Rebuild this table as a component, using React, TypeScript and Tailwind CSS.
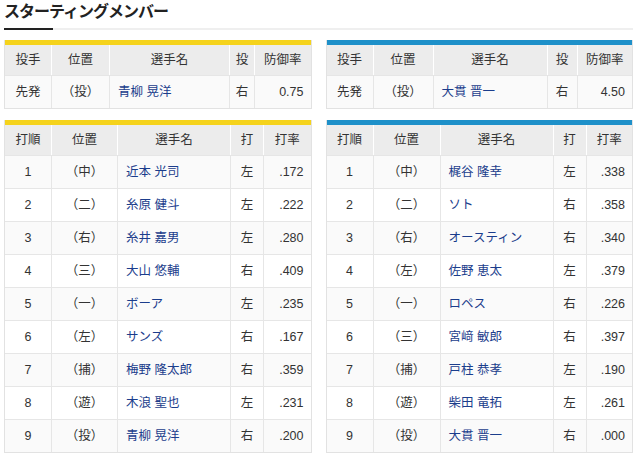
import React from 'react';

type Pitcher = { role: string; pos: string; name: string; hand: string; era: string };
type Batter = { order: number; pos: string; name: string; hand: string; avg: string };

const teams: {
  bar: string;
  pitcher: Pitcher;
  topCols: string;
  botCols: string;
  lineup: Batter[];
}[] = [
  {
    bar: 'bg-[#f5d31c]',
    topCols: 'grid-cols-[46px_58px_120px_25px_1fr]',
    botCols: 'grid-cols-[46px_66px_113px_33px_1fr]',
    pitcher: { role: '先発', pos: '（投）', name: '青柳 晃洋', hand: '右', era: '0.75' },
    lineup: [
      { order: 1, pos: '（中）', name: '近本 光司', hand: '左', avg: '.172' },
      { order: 2, pos: '（二）', name: '糸原 健斗', hand: '左', avg: '.222' },
      { order: 3, pos: '（右）', name: '糸井 嘉男', hand: '左', avg: '.280' },
      { order: 4, pos: '（三）', name: '大山 悠輔', hand: '右', avg: '.409' },
      { order: 5, pos: '（一）', name: 'ボーア', hand: '左', avg: '.235' },
      { order: 6, pos: '（左）', name: 'サンズ', hand: '右', avg: '.167' },
      { order: 7, pos: '（捕）', name: '梅野 隆太郎', hand: '右', avg: '.359' },
      { order: 8, pos: '（遊）', name: '木浪 聖也', hand: '左', avg: '.231' },
      { order: 9, pos: '（投）', name: '青柳 晃洋', hand: '右', avg: '.200' },
    ],
  },
  {
    bar: 'bg-[#1e90c9]',
    topCols: 'grid-cols-[46px_60px_114px_30px_1fr]',
    botCols: 'grid-cols-[46px_67px_113px_33px_1fr]',
    pitcher: { role: '先発', pos: '（投）', name: '大貫 晋一', hand: '右', era: '4.50' },
    lineup: [
      { order: 1, pos: '（中）', name: '梶谷 隆幸', hand: '左', avg: '.338' },
      { order: 2, pos: '（二）', name: 'ソト', hand: '右', avg: '.358' },
      { order: 3, pos: '（右）', name: 'オースティン', hand: '右', avg: '.340' },
      { order: 4, pos: '（左）', name: '佐野 恵太', hand: '左', avg: '.379' },
      { order: 5, pos: '（一）', name: 'ロペス', hand: '右', avg: '.226' },
      { order: 6, pos: '（三）', name: '宮﨑 敏郎', hand: '右', avg: '.397' },
      { order: 7, pos: '（捕）', name: '戸柱 恭孝', hand: '左', avg: '.190' },
      { order: 8, pos: '（遊）', name: '柴田 竜拓', hand: '左', avg: '.261' },
      { order: 9, pos: '（投）', name: '大貫 晋一', hand: '右', avg: '.000' },
    ],
  },
];

const head = 'flex items-center justify-center border-l border-white first:border-l-0';
const cell = 'flex items-center border-l border-[#e6e6e6] first:border-l-0';

const HeaderRow = ({ cols, labels }: { cols: string; labels: string[] }) => (
  <div className={`grid ${cols} h-[30px] bg-[#ececec] text-[#333]`}>
    {labels.map((l) => (
      <div key={l} className={head}>{l}</div>
    ))}
  </div>
);

export default function App() {
  return (
    <div
      className="w-[638px] h-[456px] bg-white pl-[4px] pr-[5px] text-[12.5px] text-[#333] overflow-hidden"
      style={{ fontFamily: '"Liberation Sans", "Noto Sans CJK JP", sans-serif' }}
    >
      <h2 className="pt-[2px] h-[24px] text-[16px] font-bold leading-[20px] text-[#222] tracking-[-1px]">
        スターティングメンバー
      </h2>
      <div className="flex items-end mt-[4px]">
        <div className="w-[49px] h-[2px] bg-[#222]" />
        <div className="flex-1 h-[2px] bg-[#efefef]" />
      </div>

      <div className="grid grid-cols-2 gap-x-[14px] mt-[10px]">
        {teams.map((t, i) => (
          <div key={'p' + i} className="border border-[#e2e2e2] border-t-0">
            <div className={`h-[5px] ${t.bar}`} />
            <HeaderRow cols={t.topCols} labels={['投手', '位置', '選手名', '投', '防御率']} />
            <div className={`grid ${t.topCols} h-[33px] bg-[#fafafa] border-t border-[#e6e6e6]`}>
              <div className={`${cell} justify-center`}>{t.pitcher.role}</div>
              <div className={`${cell} justify-center`}>{t.pitcher.pos}</div>
              <div className={`${cell} pl-[8px] text-[#1b3d8c]`}>{t.pitcher.name}</div>
              <div className={`${cell} justify-center`}>{t.pitcher.hand}</div>
              <div className={`${cell} justify-end pr-[7px]`}>{t.pitcher.era}</div>
            </div>
          </div>
        ))}
      </div>

      <div className="grid grid-cols-2 gap-x-[14px] mt-[11px]">
        {teams.map((t, i) => (
          <div key={'b' + i} className="border border-[#e2e2e2] border-t-0">
            <div className={`h-[5px] ${t.bar}`} />
            <HeaderRow cols={t.botCols} labels={['打順', '位置', '選手名', '打', '打率']} />
            {t.lineup.map((b) => (
              <div
                key={b.order}
                className={`grid ${t.botCols} h-[33px] border-t border-[#e6e6e6] ${b.order % 2 ? 'bg-[#fafafa]' : 'bg-white'}`}
              >
                <div className={`${cell} justify-center`}>{b.order}</div>
                <div className={`${cell} justify-center`}>{b.pos}</div>
                <div className={`${cell} pl-[8px] text-[#1b3d8c]`}>{b.name}</div>
                <div className={`${cell} justify-center`}>{b.hand}</div>
                <div className={`${cell} justify-end pr-[7px]`}>{b.avg}</div>
              </div>
            ))}
          </div>
        ))}
      </div>
    </div>
  );
}
